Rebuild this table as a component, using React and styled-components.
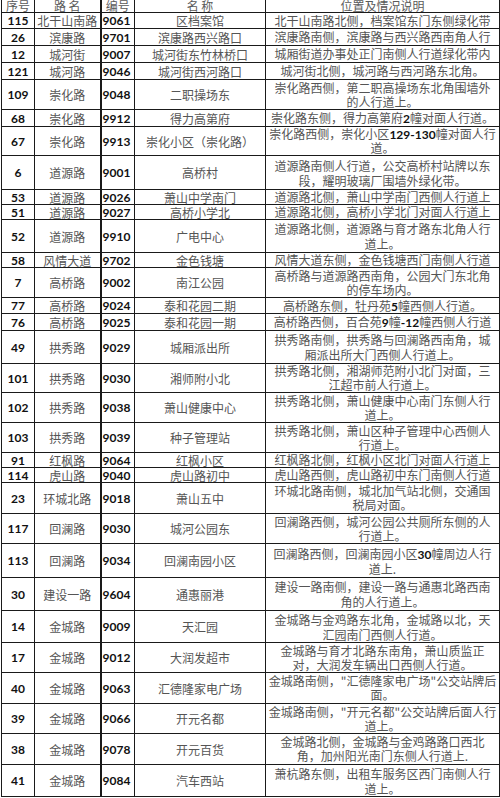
import styled, { createGlobalStyle } from 'styled-components';

const GlobalStyle = createGlobalStyle`
  body {
    margin: 0;
    background: #fff;
  }
`;

const ROWS = [
  ['115', '北干山南路', '9061', '区档案馆', ['北干山南路北侧，档案馆东门东侧绿化带'], 16],
  ['26', '滨康路', '9701', '滨康路西兴路口', ['滨康路南侧，滨康路与西兴路西南角人行'], 17],
  ['12', '城河街', '9007', '城河街东竹林桥口', ['城厢街道办事处正门南侧人行道绿化带内'], 17],
  ['121', '城河路', '9046', '城河街西河路口', ['城河街北侧，城河路与西河路东北角。'], 17],
  ['109', '崇化路', '9048', '二职操场东', ['崇化路西侧，第二职高操场东北角围墙外', '的人行道上。'], 30],
  ['68', '崇化路', '9912', '得力高第府', ['崇化路东侧，得力高第府#2#幢对面人行道。'], 17],
  ['67', '崇化路', '9913', '崇化小区（崇化路）', ['崇化路西侧，崇化小区#129-130#幢对面人行', '道。'], 29],
  ['6', '道源路', '9001', '高桥村', ['道源路南侧人行道，公交高桥村站牌以东', '段，耀明玻璃厂围墙外绿化带。'], 34],
  ['53', '道源路', '9026', '萧山中学南门', ['道源路北侧，萧山中学南门西侧人行道上'], 15],
  ['51', '道源路', '9027', '高桥小学北', ['道源路北侧，高桥小学北门对面人行道上'], 15],
  ['52', '道源路', '9910', '广电中心', ['道源路北侧，道源路与育才路东北角人行', '道上。'], 33],
  ['58', '风情大道', '9702', '金色钱塘', ['风情大道东侧，金色钱塘西门南侧人行道'], 15],
  ['7', '高桥路', '9002', '南江公园', ['高桥路与道源路西南角，公园大门东北角', '的停车场内。'], 30],
  ['77', '高桥路', '9024', '泰和花园二期', ['高桥路东侧，牡丹苑#5#幢西侧人行道。'], 16],
  ['76', '高桥路', '9025', '泰和花园一期', ['高桥路西侧，百合苑#9#幢#-12#幢西侧人行道'], 17],
  ['49', '拱秀路', '9029', '城厢派出所', ['拱秀路南侧，拱秀路与回澜路西南角，城', '厢派出所大门西侧人行道上。'], 33],
  ['101', '拱秀路', '9030', '湘师附小北', ['拱秀路北侧，湘湖师范附小北门对面，三', '江超市前人行道上。'], 29],
  ['102', '拱秀路', '9038', '萧山健康中心', ['拱秀路北侧，萧山健康中心南门东侧人行', '道上。'], 30],
  ['103', '拱秀路', '9039', '种子管理站', ['拱秀路北侧，萧山区种子管理中心西侧人', '行道上。'], 30],
  ['91', '红枫路', '9064', '红枫小区', ['红枫路北侧，红枫小区北门对面人行道上'], 14],
  ['114', '虎山路', '9040', '虎山路初中', ['虎山路西侧，虎山路初中东门南侧人行道'], 15],
  ['23', '环城北路', '9018', '萧山五中', ['环城北路南侧，城北加气站北侧，交通国', '税局对面。'], 31],
  ['117', '回澜路', '9030', '城河公园东', ['回澜路西侧，城河公园公共厕所东侧的人', '行道上。'], 30],
  ['113', '回澜路', '9034', '回澜南园小区', ['回澜路西侧，回澜南园小区#30#幢周边人行', '道上.'], 34],
  ['30', '建设一路', '9604', '通惠丽港', ['建设一路南侧，建设一路与通惠北路西南', '角的人行道上。'], 33],
  ['14', '金城路', '9009', '天汇园', ['金城路与金鸡路东北角，金城路以北，天', '汇园南门西侧人行道。'], 32],
  ['17', '金城路', '9012', '大润发超市', ['金城路与育才北路东南角，萧山质监正', '对，大润发车辆出口西侧人行道。'], 30],
  ['40', '金城路', '9063', '汇德隆家电广场', ['金城路南侧，"汇德隆家电广场"公交站牌后', '面。'], 31],
  ['39', '金城路', '9066', '开元名都', ['金城路南侧，"开元名都"公交站牌后面人行', '道上。'], 30],
  ['38', '金城路', '9078', '开元百货', ['金城路北侧，金城路与金鸡路路口西北', '角，加州阳光南门东侧人行道上.'], 31],
  ['41', '金城路', '9084', '汽车西站', ['萧杭路东侧，出租车服务区西门南侧人行', '道上。'], 32],
];

// parts wrapped in # are drawn as bold latin digits
const renderLine = (line) =>
  line.split('#').map((part, i) => (i % 2 ? <Digits key={i}>{part}</Digits> : part));

const App = () => (
  <>
    <GlobalStyle />
    <Sheet>
      <colgroup>
        <Col $w={33} />
        <Col $w={66} />
        <Col $w={34} />
        <Col $w={131} />
        <Col $w={234} />
      </colgroup>
      <thead>
        <tr>
          <HeadCell>序号</HeadCell>
          <HeadCell>路 名</HeadCell>
          <HeadCell $thick>编号</HeadCell>
          <HeadCell>名 称</HeadCell>
          <HeadCell>位置及情况说明</HeadCell>
        </tr>
      </thead>
      <tbody>
        {ROWS.map(([no, road, code, name, lines, h]) => (
          <tr key={no + code}>
            <NumCell $h={h}>{no}</NumCell>
            <Cell $h={h}>{road}</Cell>
            <NumCell $h={h} $left $thick>{code}</NumCell>
            <Cell $h={h}>{name}</Cell>
            <Cell $h={h}>
              {lines.map((line, i) => (
                <Line key={i} $tall={h >= 32}>{renderLine(line)}</Line>
              ))}
            </Cell>
          </tr>
        ))}
      </tbody>
    </Sheet>
  </>
);

export default App;

const Sheet = styled.table`
  border-collapse: collapse;
  table-layout: fixed;
  width: 498px;
  margin: 0 0 0 1px;
  font-family: 'Noto Sans CJK SC', sans-serif;
  font-size: 12px;
  color: #555;
`;

const Col = styled.col`
  width: ${({ $w }) => $w}px;
`;

const HeadCell = styled.th`
  height: 12px;
  padding: 0;
  border: 1px solid #1a1a1a;
  border-top: none;
  border-left-width: ${({ $thick }) => ($thick ? 2 : 1)}px;
  font-weight: 400;
  line-height: 12px;
  text-align: center;
  white-space: nowrap;
  color: #5a5a5a;
`;

const Cell = styled.td`
  height: ${({ $h }) => $h - 1}px;
  padding: 0 2px;
  border: 1px solid #1a1a1a;
  line-height: 13px;
  text-align: center;
  vertical-align: middle;
  white-space: nowrap;
  overflow: hidden;
`;

const NumCell = styled(Cell)`
  padding: ${({ $left }) => ($left ? '0 0 0 1px' : '0')};
  border-left-width: ${({ $thick }) => ($thick ? 2 : 1)}px;
  text-align: ${({ $left }) => ($left ? 'left' : 'center')};
  font-family: Lato, 'Liberation Sans', sans-serif;
  font-weight: 700;
  font-size: 12px;
  color: #111;
`;

const Line = styled.div`
  display: block;
  height: ${({ $tall }) => ($tall ? 15 : 14)}px;
  line-height: ${({ $tall }) => ($tall ? 15 : 14)}px;
`;

const Digits = styled.span`
  font-family: Lato, 'Liberation Sans', sans-serif;
  font-weight: 700;
  color: #111;
`;
